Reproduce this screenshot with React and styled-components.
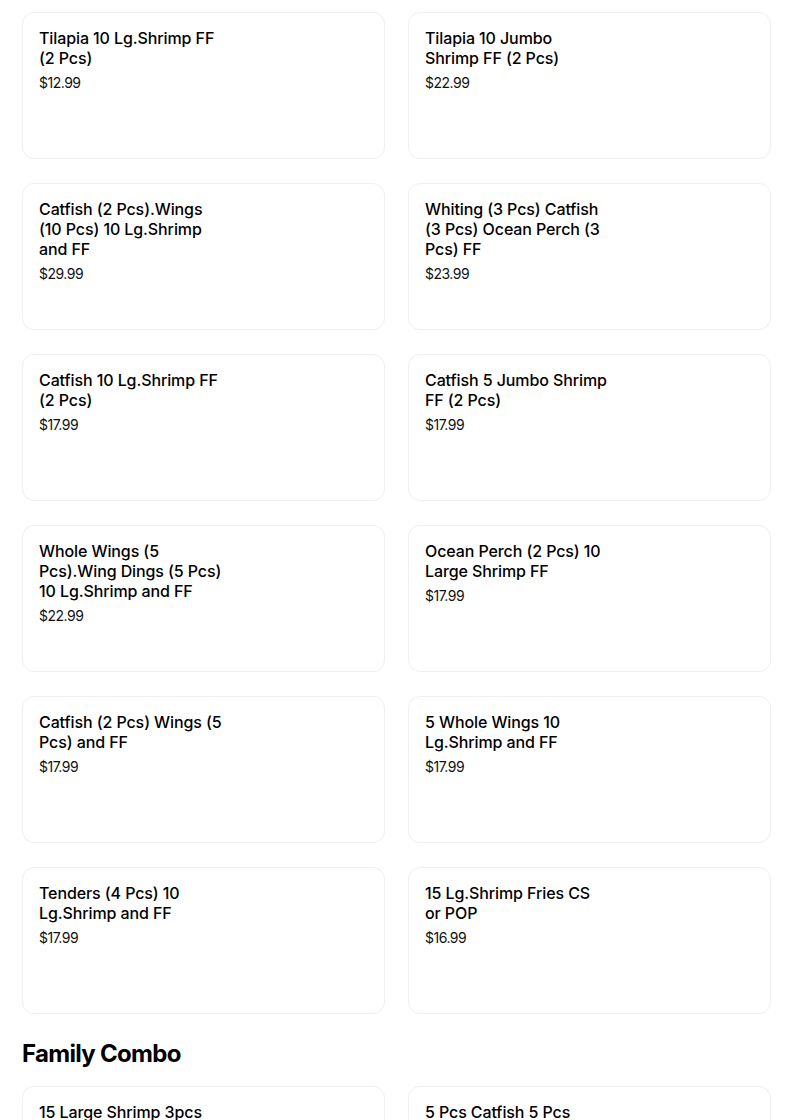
import React from "react";
import styled, { createGlobalStyle } from "styled-components";

const GlobalStyle = createGlobalStyle`
	body {
		margin: 0;
		background: #fff;
		font-family: Inter, "Noto Sans", sans-serif;
		color: #000;
	}
`;

const Page = styled.div`
	padding: 12px 33px 0 22px;
`;

const Grid = styled.div`
	display: grid;
	grid-template-columns: 1fr 1fr;
	column-gap: 23px;
	row-gap: 24px;
`;

const Card = styled.div`
	height: 147px;
	box-sizing: border-box;
	border: 1px solid #efefef;
	border-radius: 12px;
	padding: 15px 16px;
	background: #fff;
`;

const Info = styled.div`
	max-width: 184px;
`;

const Title = styled.div`
	font-size: 16px;
	font-weight: 500;
	line-height: 20px;
	letter-spacing: -0.1px;
`;

const Price = styled.div`
	margin-top: 5px;
	font-size: 14px;
	line-height: 20px;
	letter-spacing: -0.5px;
	color: #111;
`;

const SectionTitle = styled.h2`
	margin: 24px 0 16px;
	font-size: 24px;
	line-height: 32px;
	font-weight: 700;
	letter-spacing: -0.7px;
`;

const combos = [
	["Tilapia 10 Lg.Shrimp FF (2 Pcs)", "$12.99"],
	["Tilapia 10 Jumbo Shrimp FF (2 Pcs)", "$22.99"],
	["Catfish (2 Pcs).Wings (10 Pcs) 10 Lg.Shrimp and FF", "$29.99"],
	["Whiting (3 Pcs) Catfish (3 Pcs) Ocean Perch (3 Pcs) FF", "$23.99"],
	["Catfish 10 Lg.Shrimp FF (2 Pcs)", "$17.99"],
	["Catfish 5 Jumbo Shrimp FF (2 Pcs)", "$17.99"],
	["Whole Wings (5 Pcs).Wing Dings (5 Pcs) 10 Lg.Shrimp and FF", "$22.99"],
	["Ocean Perch (2 Pcs) 10 Large Shrimp FF", "$17.99"],
	["Catfish (2 Pcs) Wings (5 Pcs) and FF", "$17.99"],
	["5 Whole Wings 10 Lg.Shrimp and FF", "$17.99"],
	["Tenders (4 Pcs) 10 Lg.Shrimp and FF", "$17.99"],
	["15 Lg.Shrimp Fries CS or POP", "$16.99"],
];

const family = [
	["15 Large Shrimp 3pcs Catfish and Fries", "$34.99"],
	["5 Pcs Catfish 5 Pcs Whiting and Fries", "$34.99"],
];

const Item = ({ name, price }) => (
	<Card>
		<Info>
			<Title>{name}</Title>
			<Price>{price}</Price>
		</Info>
	</Card>
);

const App = () => {
	return (
		<Page>
			<GlobalStyle />
			<Grid>
				{combos.map(([name, price]) => (
					<Item key={name} name={name} price={price} />
				))}
			</Grid>
			<SectionTitle>Family Combo</SectionTitle>
			<Grid>
				{family.map(([name, price]) => (
					<Item key={name} name={name} price={price} />
				))}
			</Grid>
		</Page>
	);
};

export default App;
